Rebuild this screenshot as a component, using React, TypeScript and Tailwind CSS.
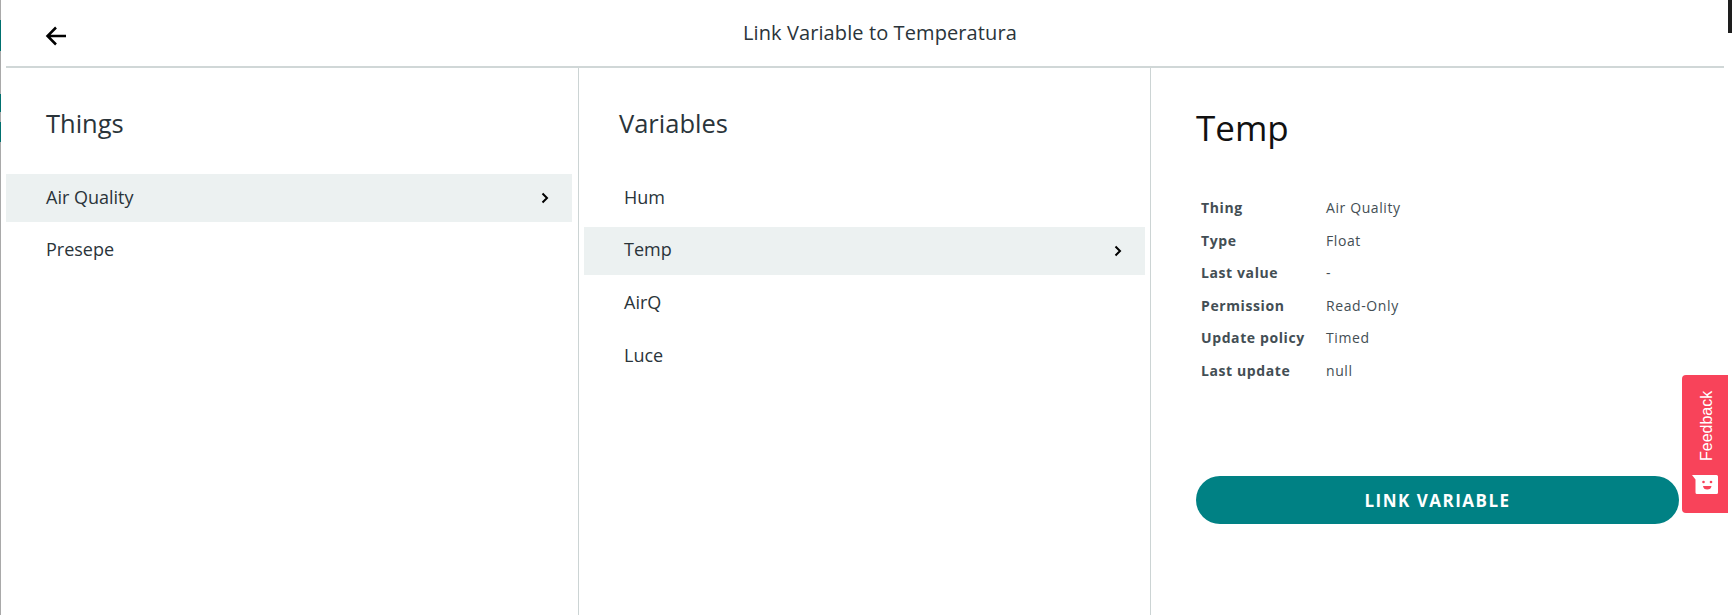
const things = ['Air Quality', 'Presepe'];
const variables = ['Hum', 'Temp', 'AirQ', 'Luce'];
const details = [
  ['Thing', 'Air Quality'],
  ['Type', 'Float'],
  ['Last value', '-'],
  ['Permission', 'Read-Only'],
  ['Update policy', 'Timed'],
  ['Last update', 'null'],
];

function ArrowLeft() {
  return (
    <svg className="mt-[5px] h-[24px] w-[24px]" viewBox="0 0 24 24" fill="none" stroke="#000" strokeWidth={2.5} aria-hidden>
      <path d="M22 12H4M12 3.500L3.500 12l8.500 8.500" />
    </svg>
  );
}

function Chevron() {
  return (
    <svg className="h-[12px] w-[12px]" viewBox="0 0 12 12" fill="none" stroke="#000" strokeWidth={2} aria-hidden>
      <path d="M3.500 1.500L8 6l-4.500 4.500" />
    </svg>
  );
}

function FeedbackIcon() {
  return (
    <svg className="h-[19px] w-[26px]" viewBox="0 0 26 19" aria-hidden>
      <path d="M0 0H24.500Q26 0 26 1.500V17.500Q26 19 24.500 19H5Q3.500 19 3.500 17.500V4.500Z" fill="#fff" />
      <circle cx="11.500" cy="7" r="1.300" fill="#f8435a" />
      <circle cx="19" cy="7" r="1.300" fill="#f8435a" />
      <path d="M11 11H19.500Q19 14.500 15.250 14.500T11 11Z" fill="#f8435a" />
    </svg>
  );
}

function ListRow({ label, active, rowClass }: { label: string; active: boolean; rowClass: string }) {
  return (
    <div className={`flex h-[48px] items-center justify-between ${rowClass} ${active ? 'bg-[#ecf1f1]' : ''}`}>
      <span className="-translate-y-[1px] text-[18px] text-[#2a343a]">{label}</span>
      {active && <Chevron />}
    </div>
  );
}

export default function App() {
  return (
    <div
      className="relative flex h-[615px] w-[1732px] flex-col overflow-hidden bg-white pl-[6px] pr-[8px]"
      style={{ fontFamily: '"Open Sans", sans-serif' }}
    >
      {/* what is left of the page behind the dialog */}
      <div className="absolute bottom-0 left-0 top-0 w-[1px] bg-[#a9a9a9]" />
      <div className="absolute left-0 top-[20px] h-[31px] w-[1px] bg-[#00706f]" />
      <div className="absolute left-0 top-[94px] h-[18px] w-[1px] bg-[#00706f]" />
      <div className="absolute left-0 top-[122px] h-[20px] w-[1px] bg-[#00706f]" />
      <div className="absolute right-0 top-0 h-[33px] w-[4px] bg-[#1e1e1e]" />

      <header className="flex h-[68px] shrink-0 items-center border-b-2 border-[#d0d7d7] pl-[38px]">
        <ArrowLeft />
        <h1 className="ml-[675px] text-[20px] tracking-[0.1px] text-[#2a343a]">Link Variable to Temperatura</h1>
      </header>

      <div className="flex min-h-0 flex-1">
        <section className="w-[572px] shrink-0 pr-[6px] pt-[37px]">
          <h2 className="mb-[33px] pl-[40px] text-[25.500px] leading-[36px] text-[#2a343a]">Things</h2>
          <div className="flex flex-col gap-[4.700px]">
            {things.map((t, i) => (
              <ListRow key={t} label={t} active={i === 0} rowClass="pl-[40px] pr-[21px]" />
            ))}
          </div>
        </section>

        <section className="w-[572px] shrink-0 border-l border-[#ccd4d4] pl-[5px] pr-[5px] pt-[37px]">
          <h2 className="mb-[33px] pl-[35px] text-[25.500px] leading-[36px] text-[#2a343a]">Variables</h2>
          <div className="flex flex-col gap-[4.700px]">
            {variables.map((v, i) => (
              <ListRow key={v} label={v} active={i === 1} rowClass="pl-[40px] pr-[21px]" />
            ))}
          </div>
        </section>

        <section className="flex-1 border-l border-[#ccd4d4] pl-[45px] pt-[35px]">
          <h2 className="text-[35px] leading-[50px] text-[#111]">Temp</h2>
          <dl className="mt-[45px] flex flex-col gap-[12.500px] pl-[5px] text-[14px] leading-[20px] tracking-[0.6px] text-[#434e54]">
            {details.map(([k, v]) => (
              <div key={k} className="flex">
                <dt className="w-[125px] font-bold">{k}</dt>
                <dd>{v}</dd>
              </div>
            ))}
          </dl>
          <button
            type="button"
            className="mt-[95px] h-[48px] w-[483px] rounded-full bg-[#008184] pt-[2px] text-[17px] font-bold tracking-[1.500px] text-white"
          >
            LINK VARIABLE
          </button>
        </section>
      </div>

      <div className="absolute left-[1682px] top-[375px] flex h-[138px] w-[46px] flex-col items-center rounded-l-[4px] bg-[#f8435a] pl-[2px] pt-[14px]">
        <span
          className="h-[72px] translate-x-[1px] text-[16px] leading-[20px] text-white [writing-mode:vertical-rl] rotate-180"
          style={{ fontFamily: '"Liberation Sans", Arial, sans-serif' }}
        >
          Feedback
        </span>
        <div className="mt-[14px] -translate-x-[1px]">
          <FeedbackIcon />
        </div>
      </div>
    </div>
  );
}
